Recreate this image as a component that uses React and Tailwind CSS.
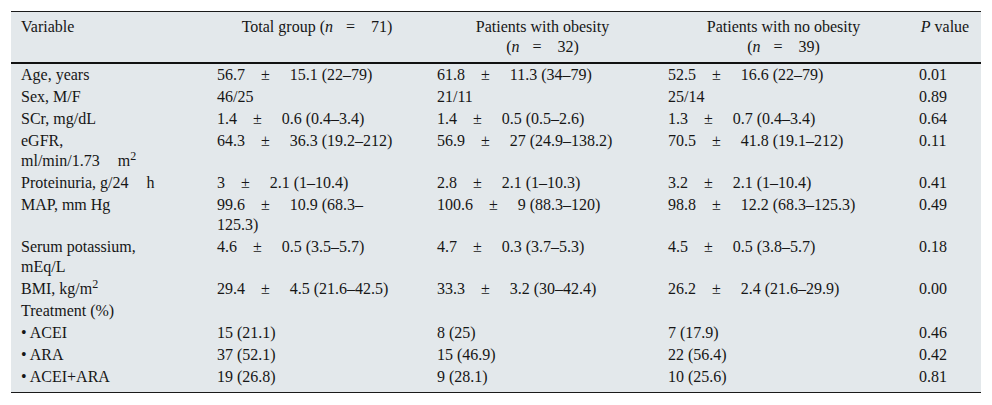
import React from "react";

const PM = ({ a, b }) => (
  <>
    {a}
    <span className="pl-[16px] pr-[20px]">±</span>
    {b}
  </>
);

const N = ({ v }) => (
  <>
    (<i>n</i>
    <span className="pl-[13px] pr-[16px]">=</span>
    {v})
  </>
);

const rows = [
  {
    label: "Age, years",
    total: <PM a="56.7" b="15.1 (22–79)" />,
    ob: <PM a="61.8" b="11.3 (34–79)" />,
    nob: <PM a="52.5" b="16.6 (22–79)" />,
    p: "0.01",
  },
  { label: "Sex, M/F", total: "46/25", ob: "21/11", nob: "25/14", p: "0.89" },
  {
    label: "SCr, mg/dL",
    total: <PM a="1.4" b="0.6 (0.4–3.4)" />,
    ob: <PM a="1.4" b="0.5 (0.5–2.6)" />,
    nob: <PM a="1.3" b="0.7 (0.4–3.4)" />,
    p: "0.64",
  },
  {
    label: (
      <>
        eGFR,
        <br />
        ml/min/1.73<span className="ml-[18px]">m</span>
        <sup>2</sup>
      </>
    ),
    total: <PM a="64.3" b="36.3 (19.2–212)" />,
    ob: <PM a="56.9" b="27 (24.9–138.2)" />,
    nob: <PM a="70.5" b="41.8 (19.1–212)" />,
    p: "0.11",
  },
  {
    label: (
      <>
        Proteinuria, g/24<span className="ml-[18px]">h</span>
      </>
    ),
    total: <PM a="3" b="2.1 (1–10.4)" />,
    ob: <PM a="2.8" b="2.1 (1–10.3)" />,
    nob: <PM a="3.2" b="2.1 (1–10.4)" />,
    p: "0.41",
  },
  {
    label: "MAP, mm Hg",
    total: (
      <>
        <PM a="99.6" b="10.9 (68.3–" />
        <br />
        125.3)
      </>
    ),
    ob: <PM a="100.6" b="9 (88.3–120)" />,
    nob: <PM a="98.8" b="12.2 (68.3–125.3)" />,
    p: "0.49",
  },
  {
    label: (
      <>
        Serum potassium,
        <br />
        mEq/L
      </>
    ),
    total: <PM a="4.6" b="0.5 (3.5–5.7)" />,
    ob: <PM a="4.7" b="0.3 (3.7–5.3)" />,
    nob: <PM a="4.5" b="0.5 (3.8–5.7)" />,
    p: "0.18",
  },
  {
    label: (
      <>
        BMI, kg/m<sup>2</sup>
      </>
    ),
    total: <PM a="29.4" b="4.5 (21.6–42.5)" />,
    ob: <PM a="33.3" b="3.2 (30–42.4)" />,
    nob: <PM a="26.2" b="2.4 (21.6–29.9)" />,
    p: "0.00",
  },
  { label: "Treatment (%)", total: "", ob: "", nob: "", p: "" },
  { label: "• ACEI", total: "15 (21.1)", ob: "8 (25)", nob: "7 (17.9)", p: "0.46" },
  { label: "• ARA", total: "37 (52.1)", ob: "15 (46.9)", nob: "22 (56.4)", p: "0.42" },
  {
    label: "• ACEI+ARA",
    total: "19 (26.8)",
    ob: "9 (28.1)",
    nob: "10 (25.6)",
    p: "0.81",
  },
];

export default function App() {
  return (
    <div className="w-[992px] h-[405px] bg-white pt-[11px] pl-[11px]">
      <div
        className="w-[970px] bg-[#e3e8eb] border-t border-b border-[#1a1a1a] text-[#161616] text-[16px] leading-[20px]"
        style={{ fontFamily: '"Liberation Serif", "Times New Roman", serif' }}
      >
        <table className="w-full table-fixed border-collapse">
          <colgroup>
            <col className="w-[196px]" />
            <col className="w-[220px]" />
            <col className="w-[231px]" />
            <col className="w-[251px]" />
            <col className="w-[72px]" />
          </colgroup>
          <thead>
            <tr className="border-b-2 border-[#111] align-top">
              <th className="px-[10px] pt-[5px] pb-[5px] font-normal text-left">
                Variable
              </th>
              <th className="px-[10px] pt-[5px] pb-[5px] font-normal text-center whitespace-nowrap">
                Total group <N v="71" />
              </th>
              <th className="px-[10px] pt-[5px] pb-[5px] font-normal text-center whitespace-nowrap">
                Patients with obesity
                <br />
                <N v="32" />
              </th>
              <th className="px-[10px] pt-[5px] pb-[5px] font-normal text-center whitespace-nowrap">
                Patients with no obesity
                <br />
                <N v="39" />
              </th>
              <th className="px-[6px] pt-[5px] pb-[5px] font-normal text-center whitespace-nowrap">
                <i>P</i> value
              </th>
            </tr>
          </thead>
          <tbody>
            {rows.map((r, i) => (
              <tr key={i} className="align-top">
                <td
                  className={`px-[10px] py-px whitespace-nowrap ${
                    i === rows.length - 1 ? "pb-[5px]" : ""
                  }`}
                >
                  {r.label}
                </td>
                <td className="px-[10px] py-px whitespace-nowrap">{r.total}</td>
                <td className="px-[10px] py-px whitespace-nowrap">{r.ob}</td>
                <td className="px-[10px] py-px whitespace-nowrap">{r.nob}</td>
                <td className="px-[10px] py-px whitespace-nowrap">{r.p}</td>
              </tr>
            ))}
          </tbody>
        </table>
      </div>
    </div>
  );
}
